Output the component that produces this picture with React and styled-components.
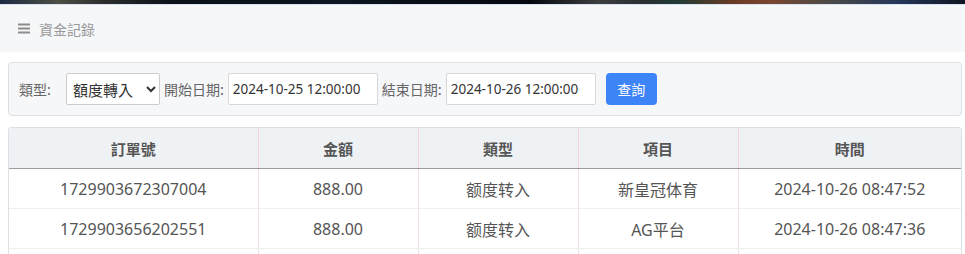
import React from "react";
import styled, { createGlobalStyle } from "styled-components";

const GlobalStyle = createGlobalStyle`
  body {
    margin: 0;
    background: #fff;
    font-family: "Noto Sans CJK TC", "Noto Sans", sans-serif;
    color: #555;
  }
`;

const records = [
  { id: "1729903672307004", amount: "888.00", type: "额度转入", item: "新皇冠体育", time: "2024-10-26 08:47:52" },
  { id: "1729903656202551", amount: "888.00", type: "额度转入", item: "AG平台", time: "2024-10-26 08:47:36" },
];

const columns = [
  { label: "訂單號", width: "249px", key: "id" },
  { label: "金額", width: "160px", key: "amount" },
  { label: "類型", width: "160px", key: "type" },
  { label: "項目", width: "160px", key: "item" },
  { label: "時間", width: "auto", key: "time" },
];

function App() {
  return (
    <>
      <GlobalStyle />
      <Banner />
      <TitleBar>
        <MenuIcon viewBox="0 0 12 10">
          <rect x="0" y="0" width="12" height="2" />
          <rect x="0" y="4" width="12" height="2" />
          <rect x="0" y="8" width="12" height="2" />
        </MenuIcon>
        資金記錄
      </TitleBar>
      <Content>
        <FilterPanel>
          <Label $first>類型:</Label>
          <Select defaultValue="transfer">
            <option value="transfer">額度轉入</option>
            <option value="out">額度轉出</option>
          </Select>
          <Label>開始日期:</Label>
          <DateInput defaultValue="2024-10-25 12:00:00" />
          <Label>結束日期:</Label>
          <DateInput defaultValue="2024-10-26 12:00:00" />
          <SearchButton>查詢</SearchButton>
        </FilterPanel>
        <TableWrap>
          <Table>
            <colgroup>
              {columns.map((c) => (
                <col key={c.key} style={{ width: c.width }} />
              ))}
            </colgroup>
            <thead>
              <tr>
                {columns.map((c) => (
                  <Th key={c.key}>{c.label}</Th>
                ))}
              </tr>
            </thead>
            <tbody>
              {records.map((r) => (
                <tr key={r.id}>
                  {columns.map((c) => (
                    <Td key={c.key}>{r[c.key]}</Td>
                  ))}
                </tr>
              ))}
              <tr>
                {columns.map((c) => (
                  <Td key={c.key} />
                ))}
              </tr>
            </tbody>
          </Table>
        </TableWrap>
      </Content>
    </>
  );
}

export default App;

const Banner = styled.div`
  height: 4px;
  background: linear-gradient(
    90deg,
    #1d2a44 0%,
    #4d4f44 6%,
    #2a2c2c 11%,
    #0a1119 18%,
    #0c1520 35%,
    #05080f 55%,
    #3c3e40 62%,
    #2a2e30 67%,
    #1f3a35 70%,
    #6b3a25 76%,
    #7a4630 80%,
    #4a4a48 86%,
    #26365a 93%,
    #101522 100%
  );
  border-bottom: 1px solid #d6e2ee;
`;

const TitleBar = styled.div`
  height: 47px;
  display: flex;
  align-items: center;
  gap: 9px;
  padding-left: 18px;
  background: #f6f7f9;
  color: #999;
  font-size: 14px;
`;

const MenuIcon = styled.svg`
  width: 12px;
  height: 11px;
  fill: #8c8c8c;
`;

const Content = styled.div`
  padding: 10px 3px 0 8px;
  display: flex;
  flex-direction: column;
  gap: 11px;
`;

const FilterPanel = styled.div`
  height: 52px;
  display: flex;
  align-items: center;
  padding: 0 10px;
  background: #f6f7f9;
  border: 1px solid #dcdfe3;
  border-radius: 4px;
`;

const Label = styled.span`
  font-size: 14px;
  color: #666;
  margin-right: ${(p) => (p.$first ? "15px" : "4px")};
`;

const Select = styled.select`
  width: 94px;
  height: 32px;
  padding: 0 2px;
  margin-right: 4px;
  border: 1px solid #ccc;
  border-radius: 2px;
  background: #fff;
  color: #333;
  font-family: inherit;
  font-size: 15px;
`;

const DateInput = styled.input`
  width: 150px;
  height: 32px;
  box-sizing: border-box;
  padding: 0 4px;
  margin-right: 4px;
  border: 1px solid #d8d8d8;
  border-radius: 2px;
  background: #fff;
  color: #333;
  font-family: "Noto Sans", sans-serif;
  font-size: 13.5px;
`;

const SearchButton = styled.button`
  width: 51px;
  height: 32px;
  margin-left: 6px;
  border: none;
  border-radius: 4px;
  background: #3d84f7;
  color: #fff;
  font-family: inherit;
  font-size: 14px;
`;

const TableWrap = styled.div`
  border: 1px solid #dcdfe3;
  border-radius: 3px;
  overflow: hidden;
`;

const Table = styled.table`
  width: 100%;
  border-collapse: collapse;
  table-layout: fixed;
`;

const Th = styled.th`
  height: 38px;
  background: #eff2f5;
  color: #555;
  font-size: 15px;
  font-weight: bold;
  text-align: center;
  border-bottom: 1px solid #9c9c9c;
  border-left: 1px solid #f1d6d9;

  &:first-child {
    border-left: none;
  }
`;

const Td = styled.td`
  height: 39px;
  padding: 0;
  text-align: center;
  color: #555;
  font-size: 16px;
  font-family: "Noto Sans", "Noto Sans CJK SC", sans-serif;
  border-bottom: 1px solid #eeeeee;
  border-left: 1px solid #f1dfe1;

  &:first-child {
    border-left: none;
  }
`;
